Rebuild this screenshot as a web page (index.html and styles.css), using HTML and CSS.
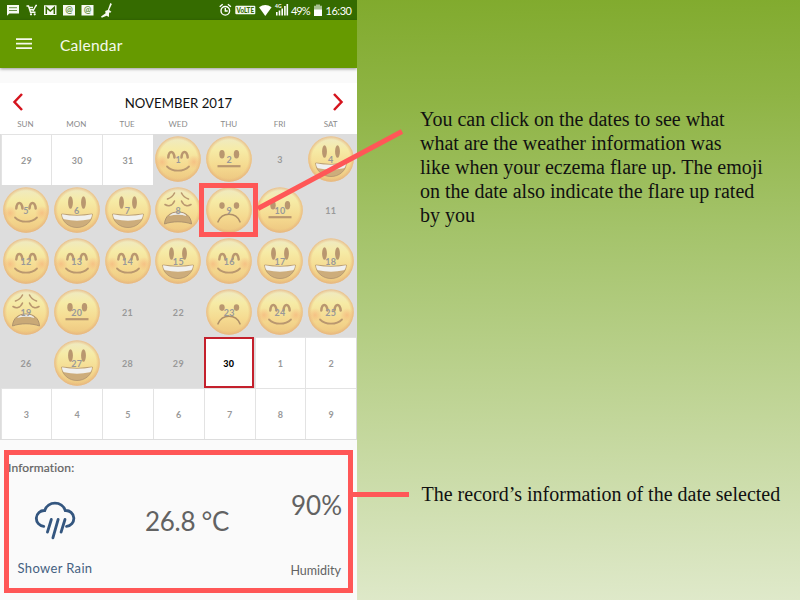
FILE: index.html
```html
<!DOCTYPE html>
<html lang="en">
<head>
<meta charset="utf-8">
<title>Calendar</title>
<link rel="stylesheet" href="styles.css">
</head>
<body>
<svg class="defs" width="0" height="0" aria-hidden="true">
  <defs>
    <linearGradient id="skin" x1="0" y1="0" x2="0" y2="1">
      <stop offset="0" stop-color="#eeeac6"/><stop offset=".3" stop-color="#f6eba6"/><stop offset=".65" stop-color="#f5da90"/><stop offset="1" stop-color="#edc680"/>
    </linearGradient>
    <radialGradient id="rim"><stop offset=".84" stop-color="#e8b87c" stop-opacity="0"/><stop offset="1" stop-color="#e5b080" stop-opacity=".8"/></radialGradient>
    <radialGradient id="blush"><stop offset="0" stop-color="#f5a574" stop-opacity=".5"/><stop offset="1" stop-color="#f5a574" stop-opacity="0"/></radialGradient>
    <symbol id="head" viewBox="0 0 46 46"><circle cx="23" cy="23" r="22.8" fill="url(#skin)"/><circle cx="23" cy="23" r="22.8" fill="url(#rim)"/></symbol>
    <symbol id="smile" viewBox="0 0 46 46">
      <use href="#head"/><circle cx="7" cy="26" r="7" fill="url(#blush)"/><circle cx="39" cy="26" r="7" fill="url(#blush)"/>
      <path d="M13.300 21.500c.6-7.500 5.400-7.500 6.200 0M26.500 21.500c.6-7.500 5.400-7.500 6.200 0" fill="none" stroke="#b9976f" stroke-width="2.500" stroke-linecap="round"/>
      <path d="M12 30.500c5.500 5.600 16.500 5.600 22 0" fill="none" stroke="#b9976f" stroke-width="1.800" stroke-linecap="round"/>
    </symbol>
    <symbol id="grin" viewBox="0 0 46 46">
      <use href="#head"/><g fill="#b9976f"><ellipse cx="16.500" cy="15.500" rx="2.400" ry="6.300"/><ellipse cx="29.500" cy="15.500" rx="2.400" ry="6.300"/></g>
      <path d="M7.700 27q15.300 3 30.600 0C38 35 31 40.500 23 40.500S8 35 7.700 27z" fill="#cdad7b" stroke="#ad926e" stroke-width=".8"/>
      <path d="M8 27.300q15 3 30 0c0 2.500-1 4.700-2.200 5Q23 35 10.200 32.300C9 32 8 29.800 8 27.300z" fill="#f0f0ee"/>
    </symbol>
    <symbol id="flat" viewBox="0 0 46 46">
      <use href="#head"/><g fill="#b9976f"><ellipse cx="16" cy="18.300" rx="2.700" ry="4.200"/><ellipse cx="30.500" cy="18.300" rx="2.700" ry="4.200"/></g>
      <path d="M11.500 30.200h23" stroke="#b9976f" stroke-width="2.200"/>
    </symbol>
    <symbol id="frown" viewBox="0 0 46 46">
      <use href="#head"/><g fill="#b9976f"><ellipse cx="16" cy="18.600" rx="2.700" ry="3.300"/><ellipse cx="30.500" cy="18.600" rx="2.700" ry="3.300"/></g>
      <path d="M12 34.800c4-10 18-10 22 0" fill="none" stroke="#ae8f69" stroke-width="1.600" stroke-linecap="round"/>
    </symbol>
    <symbol id="weary" viewBox="0 0 46 46">
      <use href="#head"/>
      <g fill="none" stroke="#b9976f" stroke-width="1.600" stroke-linecap="round"><path d="M12.500 12c3-1 5.500-3 7-6M33.500 12c-3-1-5.500-3-7-6M10 17.500c3 2 7 2 9.500-3.500M36 17.500c-3 2-7 2-9.500-3.500"/></g>
      <path d="M9.500 37c.5-8 6-12 13.500-12s13 4 13.500 12c-8-3-19-3-27 0z" fill="#c9a977" stroke="#ad926e" stroke-width="1"/>
      <path d="M14 29c2-2.500 5-3.500 9-3.500s7 1 9 3.500q-9-2.500-18 0z" fill="#ececea"/>
    </symbol>
  </defs>
</svg>
<div class="page">
  <main class="phone">
    <div class="status">
      <svg class="status-left" width="116" height="20" viewBox="0 0 116 20">
        <g fill="#f7faf3"><path d="M7 5h12v8.500H9.300L7 15.700z"/><path d="M44 5.200h12.500V15H44zM63 5h12v10.500H63zM81.500 5h12v10.500h-12z"/><path d="M110.300 3l1.600 1-2.800 6 2.300 1.700-1.200 1-1.100-.2-.2 4.500-2.300-1.200-4.800 2-.8-1.200 4.600-3.400-.4-2.200 2.600-1z"/></g>
        <path d="M9 7.700h8M9 10.500h8" stroke="#6b9449"/><path d="M46.300 14V7.500l4 3.500 4-3.500V14" fill="none" stroke="#356b00" stroke-width="1.500"/>
        <path d="M26.500 6h2l2 6.200h5M29 7.500h4M29.700 9.700h4M33 11l3-5.500h1" fill="none" stroke="#f7faf3" stroke-width="1.400"/><circle cx="31" cy="14.300" r="1.100" fill="#fff"/><circle cx="34.700" cy="14.300" r="1.100" fill="#fff"/>
        <text x="69" y="12.800" class="at">@</text><text x="87.500" y="12.800" class="at">@</text>
      </svg>
      <svg class="status-right" width="138" height="20" viewBox="219 0 138 20">
        <g fill="none" stroke="#fff" stroke-width="1.400"><circle cx="225.300" cy="10.800" r="4.300"/><path d="M225.300 8v3h2.400M219.700 6.700l3-2.500M230.900 6.700l-3-2.500"/></g>
        <rect x="235.300" y="5.700" width="20" height="8.600" rx="1" fill="#f5f9f1"/><text x="236.500" y="12.600" class="volte" textLength="17.500" lengthAdjust="spacingAndGlyphs">VoLTE</text>
        <path d="M259 7.300q6.300-4.500 12.600 0L265.300 16z" fill="#fff"/>
        <path d="M276.800 15.500v-3.500M279.500 15.500v-5M282.200 15.500V8.500M284.900 15.500V6M287.300 15.500V4" stroke="#fff" stroke-width="1.600"/><text x="275" y="8" class="four">4G</text>
        <text x="291" y="14.500" class="stat" textLength="19.500">49%</text>
        <path d="M316 4.500h4v1.200h2v5h-8v-5h2z" fill="#a6bf91"/><path d="M314 9.500h8V16h-8z" fill="#fff"/>
        <text x="325.500" y="14.500" class="stat" textLength="26.500">16:30</text>
      </svg>
    </div>
    <header class="appbar">
      <svg width="16" height="12" viewBox="0 0 16 12"><path d="M0 1.200h16M0 5.700h16M0 10.200h16" stroke="#f5f9ec" stroke-width="1.800"/></svg>
      <h1>Calendar</h1>
    </header>
    <section class="calendar">
      <div class="month">
        <svg width="12" height="20" viewBox="0 0 12 20"><path d="M10 2L2.500 10l7.500 8" fill="none" stroke="#d5141e" stroke-width="2.500"/></svg>
        <h2>NOVEMBER 2017</h2>
        <svg width="12" height="20" viewBox="0 0 12 20"><path d="M2 2l7.500 8L2 18" fill="none" stroke="#d5141e" stroke-width="2.500"/></svg>
      </div>
      <div class="week"><span>SUN</span><span>MON</span><span>TUE</span><span>WED</span><span>THU</span><span>FRI</span><span>SAT</span></div>
      <div class="days">
        <div class="day out"><b>29</b></div><div class="day out"><b>30</b></div><div class="day out"><b>31</b></div>
        <div class="day"><svg><use href="#smile"/></svg><b>1</b></div><div class="day"><svg><use href="#flat"/></svg><b>2</b></div><div class="day"><b>3</b></div><div class="day"><svg><use href="#grin"/></svg><b>4</b></div>
        <div class="day"><svg><use href="#smile"/></svg><b>5</b></div><div class="day"><svg><use href="#grin"/></svg><b>6</b></div><div class="day"><svg><use href="#grin"/></svg><b>7</b></div><div class="day"><svg><use href="#weary"/></svg><b>8</b></div><div class="day"><svg><use href="#frown"/></svg><b>9</b></div><div class="day"><svg><use href="#flat"/></svg><b>10</b></div><div class="day"><b>11</b></div>
        <div class="day"><svg><use href="#smile"/></svg><b>12</b></div><div class="day"><svg><use href="#smile"/></svg><b>13</b></div><div class="day"><svg><use href="#smile"/></svg><b>14</b></div><div class="day"><svg><use href="#grin"/></svg><b>15</b></div><div class="day"><svg><use href="#smile"/></svg><b>16</b></div><div class="day"><svg><use href="#grin"/></svg><b>17</b></div><div class="day"><svg><use href="#grin"/></svg><b>18</b></div>
        <div class="day"><svg><use href="#weary"/></svg><b>19</b></div><div class="day"><svg><use href="#flat"/></svg><b>20</b></div><div class="day"><b>21</b></div><div class="day"><b>22</b></div><div class="day"><svg><use href="#frown"/></svg><b>23</b></div><div class="day"><svg><use href="#smile"/></svg><b>24</b></div><div class="day"><svg><use href="#smile"/></svg><b>25</b></div>
        <div class="day"><b>26</b></div><div class="day"><svg><use href="#grin"/></svg><b>27</b></div><div class="day"><b>28</b></div><div class="day"><b>29</b></div><div class="day out today"><b>30</b></div><div class="day out"><b>1</b></div><div class="day out"><b>2</b></div>
        <div class="day out"><b>3</b></div><div class="day out"><b>4</b></div><div class="day out"><b>5</b></div><div class="day out"><b>6</b></div><div class="day out"><b>7</b></div><div class="day out"><b>8</b></div><div class="day out"><b>9</b></div>
      </div>
    </section>
    <section class="info">
      <h3>Information:</h3>
      <div class="weather">
        <svg width="42" height="42" viewBox="0 0 40 40"><g fill="none" stroke="#34567f" stroke-width="2.700" stroke-linecap="round"><path d="M9.300 26A7.500 7.500 0 0 1 10.200 11A10.300 10.300 0 0 1 29.800 11A7.500 7.500 0 0 1 31 26"/><path d="M16.500 19.500l-3.700 12M23 19.500l-5 17.500M29.500 19.500l-3.700 12"/></g></svg>
        <span>Shower Rain</span>
      </div>
      <div class="temp">26.8 °C</div>
      <div class="humidity"><strong>90%</strong><span>Humidity</span></div>
    </section>
  </main>
  <aside class="notes">
    <p>You can click on the dates to see what<br>what are the weather information was<br>like when your eczema flare up. The emoji<br>on the date also indicate the flare up rated<br>by you</p>
    <p class="second">The record’s information of the date selected</p>
  </aside>
  <svg class="callouts" width="800" height="600" viewBox="0 0 800 600"><g fill="none" stroke="#ff5757" stroke-width="5"><path d="M201.500 185.500h54v49h-54zM258 208.500L402 131.500M6.500 452.500h344v138h-344zM353 494.500h56"/></g></svg>
</div>
</body>
</html>
```
FILE: styles.css
```css
* { box-sizing: border-box; }
body { margin: 0; }
h1, h2, h3, p { margin: 0; font-weight: 400; }
.defs { position: absolute; }
.page { position: relative; display: flex; width: 800px; height: 600px; overflow: hidden; background: linear-gradient(179deg, #80aa2c 0%, #8fb445 18%, #a4c36a 39%, #c2d69a 70%, #dfe9ca 100%); }
.phone { width: 357px; height: 600px; flex: none; overflow: hidden; background: #fafafa; font-family: Lato, sans-serif; color: #626262; }
.status { display: flex; justify-content: space-between; height: 20px; background: #356b00; }
.at { font: bold 9px Lato, sans-serif; text-anchor: middle; fill: #6b9449; }
.volte { font: 900 7px Lato, sans-serif; fill: #356b00; }
.four { font: bold 5px Lato, sans-serif; fill: #fff; }
.stat { font: 11px Lato, sans-serif; fill: #fff; }
.appbar { display: flex; align-items: center; height: 48px; padding: 0 15px 0 16px; gap: 28px; background: #669a00; box-shadow: 0 1px 3px rgba(0,0,0,.4); }
.appbar svg { margin-top: -1px; }
.appbar h1 { font-size: 15.5px; letter-spacing: .25px; color: #f5f9ec; margin-top: 1px; }
.calendar { margin-top: 15px; background: #fff; }
.month { display: flex; align-items: center; justify-content: space-between; height: 33px; padding: 4px 13px 0 12px; }
.month h2 { font-size: 13.2px; color: #111; padding: 3px 0 0 1px; }
.week { display: grid; grid-template-columns: repeat(7, 1fr); width: 356px; height: 18px; text-align: center; font-size: 8px; line-height: 16px; color: #8b8b8b; }
.days { display: grid; grid-template-columns: repeat(7, 50.8px); grid-template-rows: repeat(6, 1fr); height: 306px; padding-left: .6px; background: #ddd; border-bottom: 1px solid #ddd; }
.day { display: grid; place-items: center; }
.day > * { grid-area: 1 / 1; }
.day svg { width: 46px; height: 46px; }
.day b { z-index: 1; padding-top: 1px; font-size: 9px; letter-spacing: .3px; color: #999; }
.out { background: #fff; border: solid #e3e3e3; border-width: 1px 0 0 1px; }
.today { border: 2px solid #c4202c; margin: 0 1px 0 0; }
.today b { color: #000; font-weight: 900; }
.info { display: grid; grid-template-columns: 110px 154px 1fr; grid-template-rows: 37px 125px; height: 160px; }
.info h3 { grid-column: 1 / 4; padding: 20px 0 0 8px; font-size: 12px; line-height: 15px; letter-spacing: .15px; -webkit-text-stroke: .2px #626262; }
.weather { display: flex; flex-direction: column; align-items: center; padding-top: 22px; color: #456181; }
.weather span { margin-top: 18px; font-size: 13px; line-height: 18px; letter-spacing: .35px; }
.temp { padding: 27px 0 0 35px; font-size: 26px; line-height: 34px; letter-spacing: -.3px; white-space: nowrap; }
.humidity { display: flex; flex-direction: column; align-items: flex-end; padding: 11px 15px 0 0; }
.humidity strong { font-size: 26px; line-height: 34px; font-weight: 400; }
.humidity span { margin: 40px 1px 0 0; font-size: 12.5px; line-height: 18px; }
.notes { padding: 107px 0 0 63px; font: 20px/24px "Liberation Serif", serif; color: #111; white-space: nowrap; }
.second { margin: 255px 0 0 1.5px; }
.callouts { position: absolute; inset: 0; }
```
